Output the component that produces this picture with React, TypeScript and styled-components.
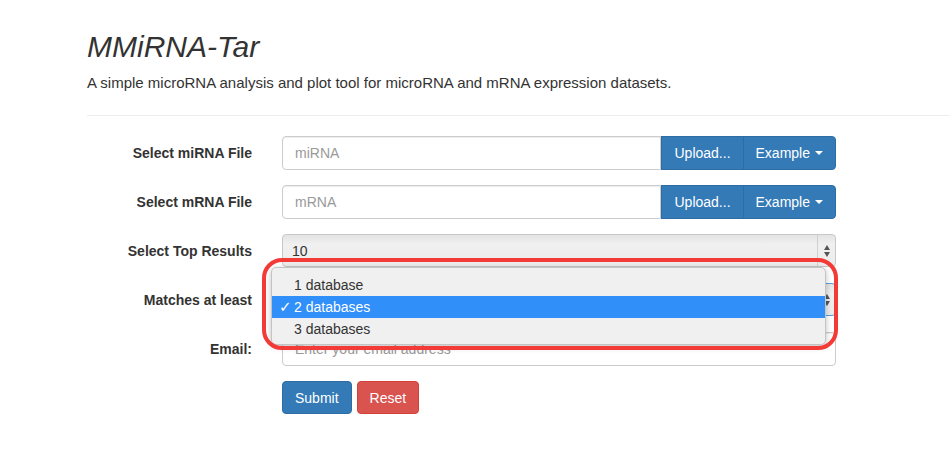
import React from "react";
import styled, { createGlobalStyle } from "styled-components";

const Global = createGlobalStyle`
  html, body { margin: 0; padding: 0; background: #fff; }
  body { font-family: "Liberation Sans", Arial, sans-serif; color: #333; font-size: 14px; }
`;

const Page = styled.div`
  padding: 30px 0 0 87px;
`;

const Title = styled.h1`
  margin: 0;
  font-size: 30px;
  line-height: 33px;
  font-style: italic;
  font-weight: normal;
  color: #333;
`;

const Lead = styled.p`
  margin: 10px 0 0;
  font-size: 15px;
  line-height: 20px;
  color: #333;
`;

const Rule = styled.hr`
  margin: 22px 0 20px;
  border: 0;
  border-top: 1px solid #eee;
`;

const Form = styled.form`
  display: grid;
  grid-template-columns: 165px 554px;
  column-gap: 30px;
  row-gap: 15px;
  align-items: center;
`;

const Label = styled.label`
  text-align: right;
  font-weight: bold;
  font-size: 14px;
  color: #333;
  height: 34px;
  line-height: 34px;
`;

const Cell = styled.div`
  position: relative;
  display: flex;
  height: 34px;
`;

const TextInput = styled.input<{ $grouped?: boolean }>`
  flex: 1;
  min-width: 0;
  box-sizing: border-box;
  height: 34px;
  padding: 6px 12px;
  font-family: "Liberation Sans", Arial, sans-serif;
  font-size: 14px;
  color: #555;
  border: 1px solid #ccc;
  border-radius: ${(p) => (p.$grouped ? "4px 0 0 4px" : "4px")};
  box-shadow: inset 0 1px 1px rgba(0, 0, 0, 0.075);
  outline: none;
  &::placeholder { color: #999; }
`;

const Btn = styled.button<{ $variant: "primary" | "danger"; $pos?: "mid" | "end" }>`
  box-sizing: border-box;
  height: ${(p) => (p.$pos ? "34px" : "33px")};
  padding: 0 12px;
  font-family: "Liberation Sans", Arial, sans-serif;
  font-size: 14px;
  color: #fff;
  background: ${(p) => (p.$variant === "primary" ? "#337ab7" : "#d9534f")};
  border: 1px solid ${(p) => (p.$variant === "primary" ? "#2e6da4" : "#d43f3a")};
  border-radius: ${(p) => (p.$pos === "mid" ? "0" : p.$pos === "end" ? "0 4px 4px 0" : "4px")};
  margin-left: ${(p) => (p.$pos === "end" ? "-1px" : "0")};
  display: inline-flex;
  align-items: center;
  gap: 5px;
  cursor: pointer;
`;

const Caret = styled.span`
  width: 0;
  height: 0;
  border-left: 4px solid transparent;
  border-right: 4px solid transparent;
  border-top: 4px solid #fff;
`;

const SelectBox = styled.div<{ $focus?: boolean }>`
  flex: 1;
  box-sizing: border-box;
  height: 33px;
  display: flex;
  align-items: center;
  border: 1px solid ${(p) => (p.$focus ? "#5b9dd9" : "#c8c8c8")};
  border-radius: 4px;
  background: linear-gradient(#e4e4e4, #f0f0f0 30%, #ececec);
  font-size: 14px;
  color: #333;
`;

const SelectValue = styled.span`
  flex: 1;
  padding-left: 9px;
`;

const Arrows = styled.span`
  width: 17px;
  height: 100%;
  border-left: 1px solid #d0d0d0;
  display: flex;
  flex-direction: column;
  align-items: center;
  justify-content: center;
  gap: 2px;
  &::before, &::after {
    content: "";
    width: 0;
    height: 0;
    border-left: 3.5px solid transparent;
    border-right: 3.5px solid transparent;
  }
  &::before { border-bottom: 5px solid #555; }
  &::after { border-top: 5px solid #555; }
`;

const Popup = styled.ul`
  position: absolute;
  left: -11px;
  top: -16px;
  width: 555px;
  box-sizing: border-box;
  margin: 0;
  padding: 6px 0 4px;
  list-style: none;
  background: #f0f0f0;
  border: 1px solid #c4c4c4;
  border-radius: 5px;
  box-shadow: 0 2px 6px rgba(0, 0, 0, 0.25);
  z-index: 2;
`;

const Option = styled.li<{ $active?: boolean }>`
  position: relative;
  height: 22px;
  line-height: 22px;
  padding-left: 22px;
  font-size: 14px;
  color: ${(p) => (p.$active ? "#fff" : "#333")};
  background: ${(p) => (p.$active ? "#308ff8" : "transparent")};
`;

const Check = styled.span`
  position: absolute;
  left: 7px;
  top: 0;
  font-family: "DejaVu Sans", sans-serif;
  font-size: 15px;
  font-weight: bold;
`;

const Annotation = styled.div`
  position: absolute;
  left: -20px;
  top: -25px;
  width: 576px;
  height: 92px;
  box-sizing: border-box;
  border: 4px solid #f43a36;
  border-radius: 20px;
  z-index: 3;
  pointer-events: none;
`;

const Actions = styled.div`
  display: flex;
  gap: 5px;
`;

export default function App() {
  return (
    <>
      <Global />
      <Page>
        <Title>MMiRNA-Tar</Title>
        <Lead>A simple microRNA analysis and plot tool for microRNA and mRNA expression datasets.</Lead>
        <Rule />
        <Form onSubmit={(e) => e.preventDefault()}>
          <Label>Select miRNA File</Label>
          <Cell>
            <TextInput $grouped placeholder="miRNA" />
            <Btn type="button" $variant="primary" $pos="mid">Upload...</Btn>
            <Btn type="button" $variant="primary" $pos="end">
              Example <Caret />
            </Btn>
          </Cell>

          <Label>Select mRNA File</Label>
          <Cell>
            <TextInput $grouped placeholder="mRNA" />
            <Btn type="button" $variant="primary" $pos="mid">Upload...</Btn>
            <Btn type="button" $variant="primary" $pos="end">
              Example <Caret />
            </Btn>
          </Cell>

          <Label>Select Top Results</Label>
          <Cell>
            <SelectBox>
              <SelectValue>10</SelectValue>
              <Arrows />
            </SelectBox>
          </Cell>

          <Label>Matches at least</Label>
          <Cell>
            <SelectBox $focus>
              <SelectValue />
              <Arrows />
            </SelectBox>
            <Popup>
              <Option>1 database</Option>
              <Option $active>
                <Check>✓</Check>2 databases
              </Option>
              <Option>3 databases</Option>
            </Popup>
            <Annotation />
          </Cell>

          <Label>Email:</Label>
          <Cell>
            <TextInput placeholder="Enter your email address" />
          </Cell>

          <span />
          <Actions>
            <Btn type="submit" $variant="primary">Submit</Btn>
            <Btn type="reset" $variant="danger">Reset</Btn>
          </Actions>
        </Form>
      </Page>
    </>
  );
}
